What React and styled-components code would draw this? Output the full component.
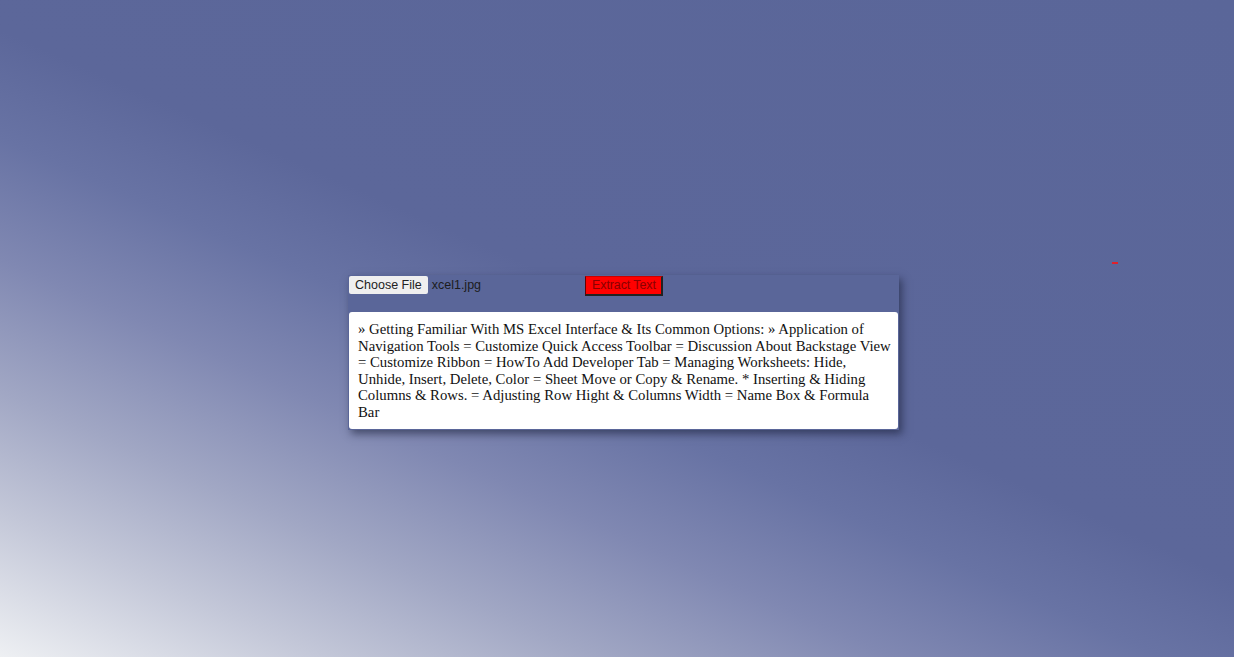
import React from 'react';
import styled, {createGlobalStyle} from 'styled-components';

const Global = createGlobalStyle`
    html, body {
        margin: 0;
        padding: 0;
        height: 100%;
    }
    body {
        font-family: "Liberation Serif", "Times New Roman", serif;
        background: linear-gradient(24deg, #eef0f3 0%, #c3c7d8 12%, #a1a7c4 22%, #8088b2 33%, #6873a4 43%, #5c679a 52%, #5a6699 100%);
        min-height: 657px;
    }
    #root {
        height: 100%;
    }
`;

const text = "» Getting Familiar With MS Excel Interface & Its Common Options: » Application of Navigation Tools = Customize Quick Access Toolbar = Discussion About Backstage View = Customize Ribbon = HowTo Add Developer Tab = Managing Worksheets: Hide, Unhide, Insert, Delete, Color = Sheet Move or Copy & Rename. * Inserting & Hiding Columns & Rows. = Adjusting Row Hight & Columns Width = Name Box & Formula Bar";

function App () {
    return (
        <Page>
            <Global/>
            <Marker/>
            <Card>
                <Toolbar>
                    <FilePicker>
                        <ChooseButton>Choose File</ChooseButton>
                        <FileName>xcel1.jpg</FileName>
                    </FilePicker>
                    <ExtractButton>Extract Text</ExtractButton>
                </Toolbar>
                <Result>{text}</Result>
            </Card>
        </Page>
    )
}

const Page = styled.div`
    position: relative;
    height: 657px;
    padding-top: 275px;
    padding-left: 348px;
    box-sizing: border-box;
`;
const Marker = styled.div`
    position: absolute;
    left: 1112px;
    top: 262px;
    width: 6px;
    height: 2px;
    background: #e0202a;
`;
const Card = styled.div`
    width: 551px;
    background: #5a6699;
    box-shadow: 3px 4px 8px rgba(20, 25, 50, 0.55);
    display: flex;
    flex-direction: column;
`;
const Toolbar = styled.div`
    height: 37px;
    display: flex;
    align-items: flex-start;
    padding-top: 1px;
    padding-left: 1px;
    box-sizing: border-box;
`;
const FilePicker = styled.div`
    width: 236px;
    display: flex;
    align-items: center;
    gap: 4px;
    font-family: "Liberation Sans", Arial, sans-serif;
    font-size: 12.5px;
`;
const ChooseButton = styled.div`
    background: #efefef;
    color: #222;
    height: 18px;
    line-height: 18px;
    padding: 0 6px;
    border-radius: 2px;
`;
const FileName = styled.span`
    color: #1c1c1c;
`;
const ExtractButton = styled.div`
    background: #ff0000;
    color: #8a0000;
    font-family: "Liberation Sans", Arial, sans-serif;
    font-size: 12.5px;
    height: 17px;
    line-height: 17px;
    padding: 0 5px 0 6px;
    letter-spacing: -0.1px;
    border-top: 1px solid #c00;
    border-left: 1px solid #600;
    border-right: 2px solid #222;
    border-bottom: 2px solid #222;
`;
const Result = styled.div`
    margin: 0 1px 1px 1px;
    background: #ffffff;
    border-radius: 3px;
    padding: 9px 7px 9px 9px;
    font-size: 14.75px;
    line-height: 16.5px;
    color: #111;
`;

export default App;
